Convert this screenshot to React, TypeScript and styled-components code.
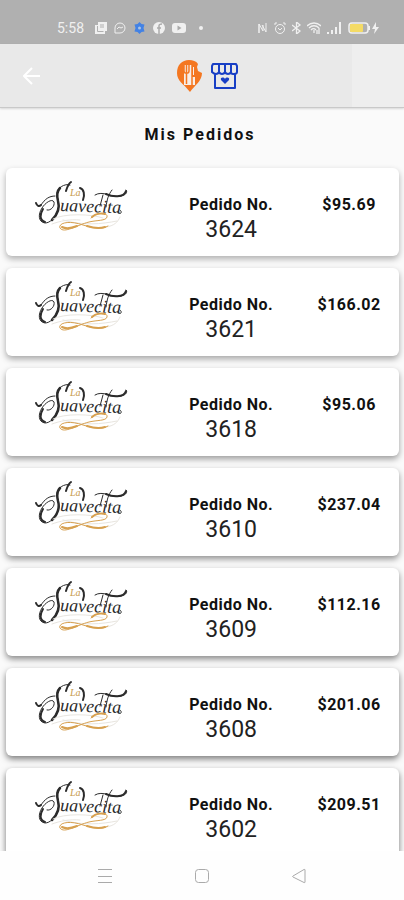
import React from "react";
import styled, { createGlobalStyle } from "styled-components";

const GlobalStyle = createGlobalStyle`
  * { box-sizing: border-box; }
  body { margin: 0; background: #fafafa; color: #111; font-family: Roboto, "Liberation Sans", sans-serif; }
`;

const Screen = styled.div`
  display: flex;
  flex-direction: column;
  height: 100vh;
  overflow: hidden;
`;

const StatusBar = styled.div`
  display: flex;
  flex: none;
  align-items: flex-end;
  justify-content: space-between;
  height: 44px;
  padding: 0 24px 7px 57px;
  background: #b0b0b0;
  color: #f0f0f0;
`;

const StatusGroup = styled.div<{ $gap: number }>`
  display: flex;
  align-items: center;
  gap: ${(p) => p.$gap}px;
  height: 18px;
  svg { display: block; }
`;

const Clock = styled.time`
  width: 31px;
  font-size: 14px;
  line-height: 18px;
`;

const Header = styled.header`
  display: grid;
  flex: none;
  grid-template-columns: 52px 1fr 52px;
  height: 64px;
  background: #e9e9e9;
  border-bottom: 1px solid #c9c9c9;
  box-shadow: 0 1px 2px rgba(0, 0, 0, 0.14);
`;

const IconButton = styled.button`
  display: flex;
  align-items: center;
  justify-content: center;
  padding: 0;
  border: 0;
  background: transparent;
`;

const BackButton = styled(IconButton)`
  padding-left: 12px;
`;

const Brand = styled.div`
  display: flex;
  align-items: center;
  justify-content: center;
  gap: 8px;
  padding-left: 10px;
`;

const HeaderEnd = styled.div`
  background: #eee;
`;

const Content = styled.main`
  flex: 1;
  min-height: 0;
  overflow: hidden;
`;

const Title = styled.h1`
  margin: 0;
  padding: 14px 4px 20px 0;
  font-size: 16px;
  font-weight: 700;
  line-height: 26px;
  letter-spacing: 2px;
  text-align: center;
`;

const OrderList = styled.ul`
  display: flex;
  flex-direction: column;
  gap: 12px;
  margin: 0;
  padding: 0 5px 12px 6px;
  list-style: none;
`;

const OrderCard = styled.li<{ $depth: number }>`
  display: grid;
  grid-template-columns: 7fr 7fr 4fr;
  height: 88px;
  padding-right: 7px;
  border-radius: 6px;
  background: #fff;
  box-shadow: 0 3px 6px rgba(0, 0, 0, ${(p) => (30 + p.$depth * 4) / 100});
  text-align: center;
`;

const LogoCell = styled.div`
  padding-top: 9px;
  svg { display: block; margin: 0 auto; }
`;

const Cell = styled.div`
  padding-top: 26px;
`;

const Strong = styled.div`
  font-size: 16px;
  font-weight: 700;
  line-height: 21px;
  letter-spacing: 0.5px;
  white-space: nowrap;
`;

const OrderNumber = styled.div`
  color: #222;
  font-size: 23px;
  line-height: 30px;
`;

const NavBar = styled.nav`
  display: flex;
  flex: none;
  justify-content: center;
  gap: 73px;
  height: 49px;
  background: #fefefe;
`;

const orders = [
  { id: 3624, total: "$95.69" },
  { id: 3621, total: "$166.02" },
  { id: 3618, total: "$95.06" },
  { id: 3610, total: "$237.04" },
  { id: 3609, total: "$112.16" },
  { id: 3608, total: "$201.06" },
  { id: 3602, total: "$209.51" },
];

const SuavecitaLogo = () => (
  <svg width="96" height="58" viewBox="0 0 96 58" role="img" aria-label="La Suavecita">
    <g fill="none" strokeLinecap="round" strokeLinejoin="round">
      <g stroke="#2b2b2b">
        <path d="M37 8C32 6 23 11 24 18c1 6 3 10 1 15-3 8-8 13-13 13-7-1-7-9-3-15 3-5 10-10 12-6 1 4-3 9-7 8" strokeWidth="1" />
        <path d="M27 11c-4 4-3 9-2 13 2 7-1 14-6 19" strokeWidth="2.500" />
        <path d="M38 5c-3 2-4 6-5 9" strokeWidth="2" />
        <path d="M8 28c4-6 8-9 14-9" strokeWidth="1" />
        <path d="M3 26c1 3 3 4 5 2" strokeWidth="2" />
        <path d="M12 45c-6-2-5-8-2-13" strokeWidth="2" />
        <path d="M47 11c4 1 5 7 3 12" strokeWidth="2" />
        <path d="M62 18c8-5 16 3 26 1 5-1 7-4 5-6" strokeWidth="1" />
        <path d="M73 17c6 3 18 4 20-3" strokeWidth="2" />
        <path d="M79 13c-4 5-5 10-6 17M70 18l-3 11" strokeWidth="1" />
        <path d="M85 36c4 2 4-2 2-3" strokeWidth="1" />
      </g>
      <path d="M20 42c11-6 39-5 50-1M19 47c8-3 18-5 28-4M73 50c8-1 12-5 14-10M30 43c20 6 39 4 54 1" stroke="#e8e5df" strokeWidth="1" />
      <g stroke="#d7a04f">
        <path d="M58 41c6-6 17-6 16-1-1 4-10 3-18 5-12 3-25 12-29 6-2-5 9-8 23-3 10 3 19 5 25 1" strokeWidth="1" />
        <path d="M59 40c4-4 10-4 13-3M29 50c4 2 10 1 15-1M54 49c6 2 12 3 18 1" strokeWidth="2" />
      </g>
    </g>
    <text x="37" y="19" fontFamily="Liberation Serif, serif" fontStyle="italic" fontSize="10" fill="#c69a4b">La</text>
    <text x="27" y="34" fontFamily="Liberation Serif, serif" fontStyle="italic" fontSize="18" fill="#2b2b2b" transform="rotate(2 27 34)">uavecita</text>
  </svg>
);

const FoodPin = () => (
  <svg width="27" height="34" viewBox="0 0 27 34" aria-hidden="true">
    <path d="M13 1C6 1 1 6 1 14c0 8 6 10 13 19 5-7 12-11 12-19l-4-2-1-4 1-3C20 2 17 1 13 1z" fill="#f47721" />
    <path d="M8 6h11v20H8z" fill="#f8eee7" />
    <path d="M8 6v6c0 3 5 3 5 0V6M10.500 6v19M16 6v20" fill="none" stroke="#f47721" strokeWidth="1.500" />
    <path d="M16 6h3v12h-3z" fill="#f47721" />
    <path d="M17 8h1v8h-1z" fill="#f8eee7" />
  </svg>
);

const StoreIcon = () => (
  <svg width="27" height="26" viewBox="0 0 27 26" aria-hidden="true">
    <g fill="none" stroke="#183fc5" strokeWidth="2" strokeLinejoin="round">
      <path d="M2 1h23l1 2v6q0 2-3 2h-1q-2 0-2-2-1 2-3 2t-3-2q-1 2-3 2T8 9q-1 2-3 2T1 9V3zM8 1v8M14 1v8M20 1v8M4 11v14h20V11" />
    </g>
    <path d="M14 21l-4-4c-1-3 3-3 4-1 1-2 5-2 4 1z" fill="#183fc5" />
  </svg>
);

export default function App() {
  return (
    <Screen>
      <GlobalStyle />
      <StatusBar>
        <StatusGroup $gap={7}>
          <Clock>5:58</Clock>
          <svg width="12" height="12" viewBox="0 0 12 12" aria-hidden="true">
            <path d="M3 0h9v9h-2v3H0V3h3z" fill="currentColor" />
            <path d="M2.500 4v5.500h6M5 3h4M5 5h4" fill="none" stroke="#b0b0b0" />
          </svg>
          <svg width="12" height="12" viewBox="0 0 12 12" aria-hidden="true">
            <path d="M1 11V6a5 5 0 1 1 5 5zM3 7l2-2 2 1 2-1" fill="none" stroke="currentColor" />
          </svg>
          <svg width="13" height="12" viewBox="0 0 13 12" aria-hidden="true">
            <path d="M6.500 0l2 2 3 .5-1 3.500 1 3.500-3 .5-2 2-2-2-3-.5 1-3.500-1-3.500 3-.5z" fill="#4382e4" />
            <circle cx="6.500" cy="6" r="1.500" fill="#aac4e7" />
          </svg>
          <svg width="12" height="12" viewBox="0 0 12 12" aria-hidden="true">
            <circle cx="6" cy="6" r="6" fill="currentColor" />
            <path d="M6 12V4c0-2 1-2 3-2M4 6h4" fill="none" stroke="#aaa" strokeWidth="1.500" />
          </svg>
          <svg width="14" height="10" viewBox="0 0 14 10" aria-hidden="true">
            <rect width="14" height="10" rx="3" fill="currentColor" />
            <path d="M5.500 2.500v5l4-2.500z" fill="#aaa" />
          </svg>
          <svg width="16" height="4" viewBox="0 0 16 4" aria-hidden="true">
            <circle cx="8" cy="2" r="2" fill="currentColor" />
          </svg>
        </StatusGroup>
        <StatusGroup $gap={6}>
          <svg width="10" height="12" viewBox="0 0 10 12" fill="none" stroke="currentColor" aria-hidden="true">
            <path d="M1 11V2l4 7V3M4 3l4 7V1M1 2v9" />
          </svg>
          <svg width="12" height="12" viewBox="0 0 12 12" fill="none" stroke="currentColor" aria-hidden="true">
            <circle cx="6" cy="7" r="4.500" />
            <path d="M1 3V1h2M9 1h2v2M4 6l2 2 2-2" />
          </svg>
          <svg width="9" height="12" viewBox="0 0 9 12" fill="none" stroke="currentColor" aria-hidden="true">
            <path d="M0 3l8 6-3.500 3V0L8 3 0 9" strokeWidth="1.300" />
          </svg>
          <svg width="14" height="12" viewBox="0 0 14 12" fill="none" stroke="currentColor" aria-hidden="true">
            <path d="M0 4c4-4 10-4 14 0M2 6c3-3 7-3 10 0M4 8c2-2 3-2 5 0M7 8v3M10 8v4M12 6v6" strokeWidth="1.300" />
          </svg>
          <svg width="15" height="12" viewBox="0 0 15 12" stroke="currentColor" aria-hidden="true">
            <path d="M1 12v-2M5 12V8M9 12V5M13 12V0" strokeWidth="2" />
          </svg>
          <svg width="32" height="12" viewBox="0 0 32 12" aria-hidden="true">
            <rect x="1" y="1" width="19" height="10" rx="3" fill="none" stroke="currentColor" strokeWidth="1.500" />
            <rect x="2" y="2" width="13" height="8" rx="1" fill="#f4db65" />
            <path d="M21 4v4" stroke="currentColor" strokeWidth="2" />
            <path d="M28 0l-4 7h3l-1 5 5-7h-3z" fill="currentColor" />
          </svg>
        </StatusGroup>
      </StatusBar>
      <Header>
        <BackButton type="button" aria-label="Volver">
          <svg width="18" height="18" viewBox="0 0 18 18" fill="none" stroke="#fff" strokeWidth="2" aria-hidden="true">
            <path d="M17 9H2M9 1L1 9l8 8" />
          </svg>
        </BackButton>
        <Brand><FoodPin /><StoreIcon /></Brand>
        <HeaderEnd />
      </Header>
      <Content>
        <Title>Mis Pedidos</Title>
        <OrderList>
          {orders.map((order, index) => (
            <OrderCard key={order.id} $depth={index}>
              <LogoCell><SuavecitaLogo /></LogoCell>
              <Cell>
                <Strong>Pedido No.</Strong>
                <OrderNumber>{order.id}</OrderNumber>
              </Cell>
              <Cell><Strong>{order.total}</Strong></Cell>
            </OrderCard>
          ))}
        </OrderList>
      </Content>
      <NavBar>
        <IconButton type="button" aria-label="Recientes">
          <svg width="24" height="24" viewBox="0 0 24 24" fill="none" stroke="#aaa" aria-hidden="true">
            <path d="M5 5.500h14M5 12.500h14M5 18.500h14" />
          </svg>
        </IconButton>
        <IconButton type="button" aria-label="Inicio">
          <svg width="24" height="24" viewBox="0 0 24 24" fill="none" stroke="#aaa" aria-hidden="true">
            <rect x="5.500" y="5.500" width="13" height="13" rx="3" />
          </svg>
        </IconButton>
        <IconButton type="button" aria-label="Atrás">
          <svg width="24" height="24" viewBox="0 0 24 24" fill="none" stroke="#aaa" strokeLinejoin="round" aria-hidden="true">
            <path d="M18 6v12q0 1-1 .5L6 13q-1-.5 0-1l11-6.500q1-.5 1 .5z" />
          </svg>
        </IconButton>
      </NavBar>
    </Screen>
  );
}
